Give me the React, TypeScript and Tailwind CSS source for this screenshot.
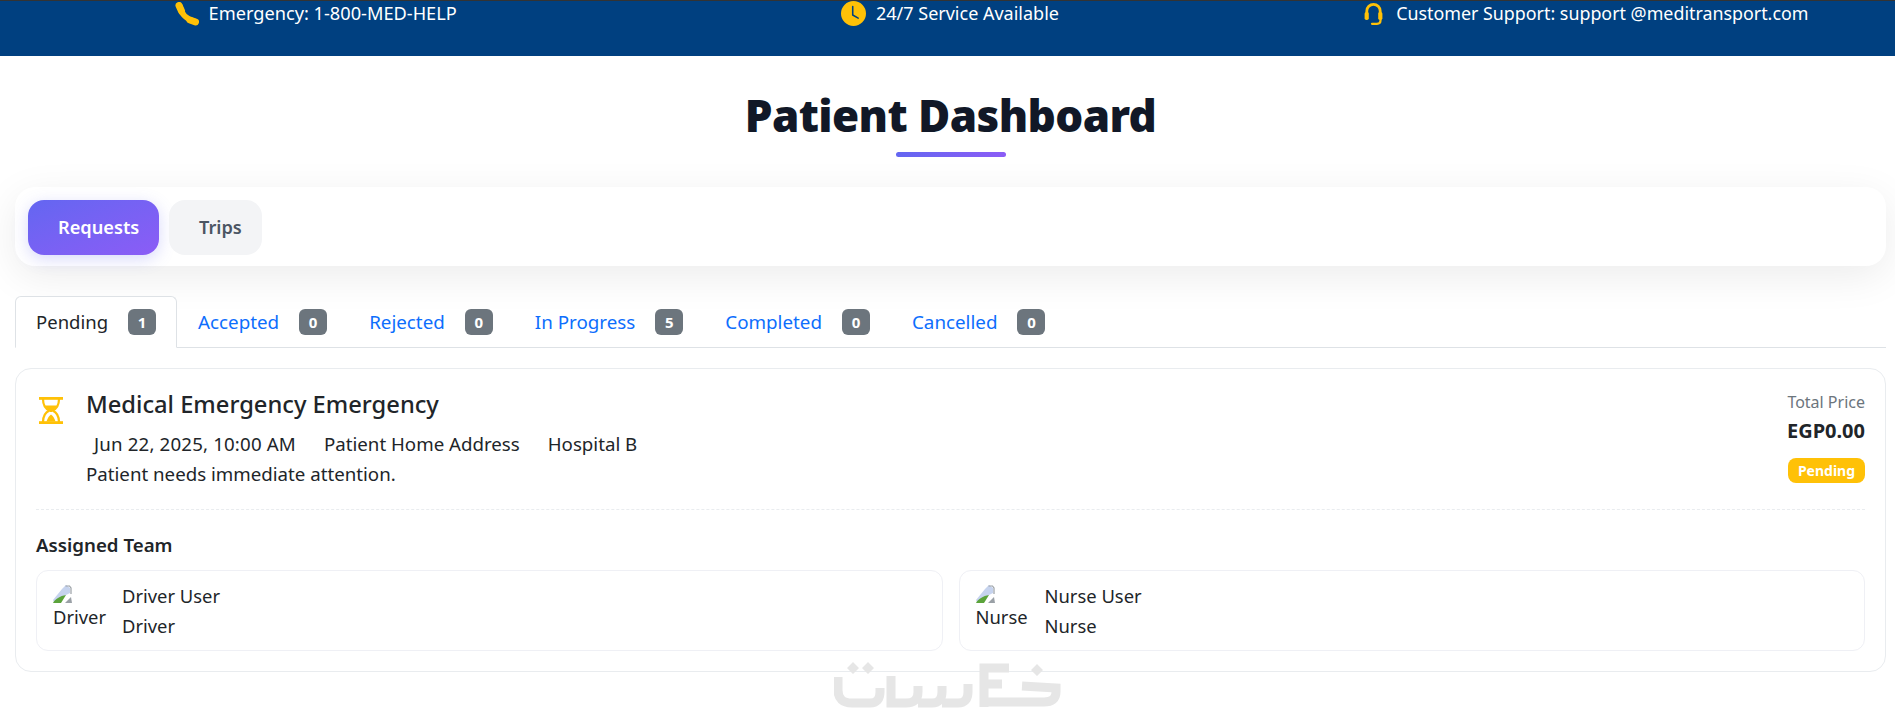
import { BsClockFill } from "react-icons/bs";

const subTabs = [
  { label: "Pending", count: 1, active: true },
  { label: "Accepted", count: 0 },
  { label: "Rejected", count: 0 },
  { label: "In Progress", count: 5 },
  { label: "Completed", count: 0 },
  { label: "Cancelled", count: 0 },
];

function PhoneIcon() {
  return (
    <svg width="24" height="24" viewBox="0 0 24 24" className="mt-[1px] shrink-0" fill="none" stroke="#ffc107" strokeLinecap="round">
      <path d="M5 4 Q6 15 19.5 19.5" strokeWidth="5.6" />
      <path d="M4 3.5 L6.5 9" strokeWidth="7" />
      <path d="M15 18 L20.5 20" strokeWidth="7" />
    </svg>
  );
}

function HeadsetIcon() {
  return (
    <svg width="19" height="24" viewBox="0 0 19 24" className="mt-[1px] shrink-0" fill="none" stroke="#ffc107">
      <path d="M2.8 12 V9 a6.7 6.7 0 0 1 13.4 0 V12" strokeWidth="2.8" />
      <rect x="0.6" y="10" width="4.2" height="8" rx="1.8" fill="#ffc107" stroke="none" />
      <rect x="14.2" y="10" width="4.2" height="8" rx="1.8" fill="#ffc107" stroke="none" />
      <path d="M16.5 17 V18.5 Q16.5 21.8 13 21.8 H8" strokeWidth="2.2" strokeLinecap="round" />
    </svg>
  );
}

function HourglassIcon() {
  return (
    <svg width="24" height="27" viewBox="0 0 24 27" className="mt-[8px] ml-[3px] shrink-0">
      <rect x="0" y="0" width="24" height="2.8" fill="#ffc107" />
      <rect x="0" y="24.2" width="24" height="2.8" fill="#ffc107" />
      <path d="M4 2 C4 8 6 11.5 10.4 13.5 C6 15.5 4 19 4 25" fill="none" stroke="#ffc107" strokeWidth="2.2" />
      <path d="M20 2 C20 8 18 11.5 13.6 13.5 C18 15.5 20 19 20 25" fill="none" stroke="#ffc107" strokeWidth="2.2" />
      <path d="M6 8.5 H18 C17 11 15 12.4 13.2 13.2 V15 H10.8 V13.2 C9 12.4 7 11 6 8.5 Z" fill="#ffc107" />
      <path d="M7.5 24.5 C8.5 21 10 19 12 17.5 C14 19 15.5 21 16.5 24.5 Z" fill="#ffc107" />
    </svg>
  );
}

function BrokenImage({ alt }: { alt: string }) {
  return (
    <div className="w-[60px] h-[50px] mt-[4px] overflow-hidden shrink-0 text-[18.4px] leading-[24px]">
      <svg width="19" height="18" viewBox="0 0 19 18" className="block">
        <path d="M0 15 L9 4 L13 0 L17 3 L17 8 L9 12 L1 17 Z" fill="#c6d3ee" />
        <path d="M0 18 C2 14 7 11 13 10 L8 18 Z" fill="#5ba33b" />
        <path d="M12 18 L18 12 L19 18 Z" fill="#9aa0a6" />
        <path d="M12.5 1 H16.5 L18 3 V9" fill="none" stroke="#9aa0a6" strokeWidth="1.2" />
      </svg>
      <div className="mt-[2px]">{alt}</div>
    </div>
  );
}

function TeamCard({ name, role }: { name: string; role: string }) {
  return (
    <div className="flex-1 h-[81px] border border-[#eff0f5] rounded-[12px] pl-[16px] pt-[10px] flex gap-[9px]">
      <BrokenImage alt={role} />
      <div className="text-[18.4px] leading-[30px] text-[#212529]">
        <div>{name}</div>
        <div>{role}</div>
      </div>
    </div>
  );
}

export default function App() {
  return (
    <div className="relative h-[722px] bg-white font-['Noto_Sans','Open_Sans',sans-serif] text-[#212529] overflow-hidden">
      <header className="h-[56px] bg-[#004080] border-t border-[#333] text-white leading-[24px] flex">
        <div className="flex-1 flex items-start justify-center gap-[10px] pl-[7px] text-[18.2px]">
          <PhoneIcon />
          <span>Emergency: 1-800-MED-HELP</span>
        </div>
        <div className="flex-1 flex items-start justify-center gap-[10px] pl-[17px] text-[18px]">
          <BsClockFill className="text-[#ffc107] w-[25px] h-[25px] shrink-0" />
          <span>24/7 Service Available</span>
        </div>
        <div className="flex-1 flex items-start justify-center gap-[13px] pl-[19px] text-[17.85px]">
          <HeadsetIcon />
          <span>Customer Support: support @meditransport.com</span>
        </div>
      </header>

      <main className="pl-[15px] pr-[9px]">
        <div className="pt-[26px] text-center">
          <h1 className="text-[44px] leading-[66px] font-black tracking-[-0.6px] text-[#111827]">Patient Dashboard</h1>
          <div className="mx-auto mt-[4px] w-[110px] h-[5px] rounded-full bg-gradient-to-r from-[#6366f1] to-[#8b5cf6]" />
        </div>

        <div className="mt-[30px] h-[79px] bg-white rounded-[20px] shadow-[0_10px_40px_rgba(0,0,0,0.08)] p-[13px] flex gap-[10px]">
          <button className="w-[131px] h-[55px] pl-[30px] text-left rounded-[16px] bg-gradient-to-br from-[#6366f1] to-[#8b5cf6] text-white font-semibold text-[18.2px] shadow-[0_4px_16px_rgba(99,102,241,0.25)]">
            Requests
          </button>
          <button className="w-[93px] h-[55px] pl-[30px] text-left rounded-[16px] bg-[#f3f4f6] text-[#4b5563] font-semibold text-[18.2px]">
            Trips
          </button>
        </div>

        <nav className="mt-[30px] h-[52px] flex border-b border-[#dee2e6]">
          {subTabs.map((t) => (
            <div
              key={t.label}
              className={
                t.active
                  ? "h-[52px] px-[20px] flex items-center gap-[20px] border border-[#dee2e6] border-b-white rounded-t-[6px] bg-white text-[18.5px] text-[#212529]"
                  : "h-[52px] px-[21px] flex items-center gap-[20px] text-[18.8px] text-[#0d6efd]"
              }
            >
              <span>{t.label}</span>
              <span className="w-[28px] h-[26px] rounded-[6px] bg-[#6c757d] text-white text-[15px] font-bold flex items-center justify-center">
                {t.count}
              </span>
            </div>
          ))}
        </nav>

        <section className="mt-[20px] h-[304px] border border-[#e9ecef] rounded-[16px] px-[20px] pt-[20px]">
          <div className="h-[121px] flex border-b border-dashed border-[#e9ecef]">
            <HourglassIcon />
            <div className="ml-[23px] flex-1 -mt-[3px]">
              <h3 className="text-[23.7px] leading-[36px] font-medium text-[#212529]">Medical Emergency Emergency</h3>
              <div className="mt-[7px] flex gap-[28px] text-[18.7px] leading-[30px] pl-[8px]">
                <span className="tracking-[0.16px]">Jun 22, 2025, 10:00 AM</span>
                <span>Patient Home Address</span>
                <span>Hospital B</span>
              </div>
              <div className="text-[18.7px] leading-[30px]">Patient needs immediate attention.</div>
            </div>
            <div className="flex flex-col items-end pt-[1px]">
              <div className="text-[16px] leading-[24px] text-[#6c757d]">Total Price</div>
              <div className="text-[20px] leading-[28px] font-bold mt-[3px]">EGP0.00</div>
              <div className="mt-[13px] h-[25px] w-[77px] justify-center rounded-[8px] bg-[#ffc107] text-white text-[14px] font-bold flex items-center">
                Pending
              </div>
            </div>
          </div>
          <div className="mt-[21px] text-[18.7px] leading-[27px] font-semibold">Assigned Team</div>
          <div className="mt-[12px] flex gap-[16px]">
            <TeamCard name="Driver User" role="Driver" />
            <TeamCard name="Nurse User" role="Nurse" />
          </div>
        </section>
      </main>

      <svg
        width="228"
        height="46"
        viewBox="0 0 228 46"
        className="absolute left-[834px] top-[662px] pointer-events-none"
        fill="none"
        stroke="#e6e6e6"
        strokeWidth="9"
      >
        <path d="M4 15 V28 Q4 41 18 41 H36 Q46 41 46 30 V26" />
        <path d="M57 14 V41 H72 Q84 41 84 30 V24 M84 41 H98 Q108 41 108 30 V24 M108 41 H124 Q134 41 134 30 V22" />
        <path d="M150 45 V6 H175 M150 22 H168 M150 40 H210 Q222 40 222 30 V26 L188 24" />
        <path d="M19 0 l6 6 l-6 6 l-6 -6 Z M34 0 l6 6 l-6 6 l-6 -6 Z M203 2 l6 6 l-6 6 l-6 -6 Z" fill="#e6e6e6" stroke="none" />
      </svg>
    </div>
  );
}
